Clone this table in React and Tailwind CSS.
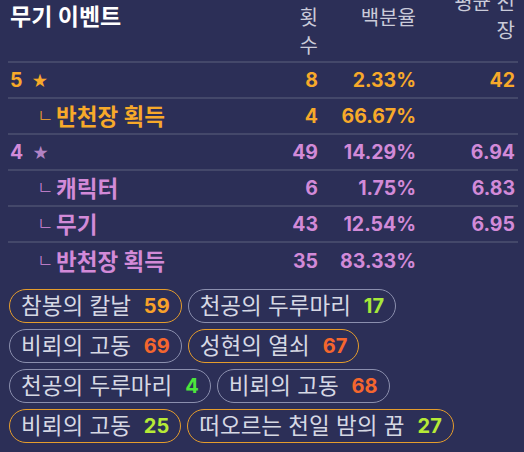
import React from "react";

const KR = "font-['Inter','Noto_Sans_CJK_KR',sans-serif]";

const rows = [
  { label: "5", star: true, tone: "text-[#f7a92a]", starTone: "text-[#f7a92a]", count: "8", pct: "2.33%", avg: "42" },
  { label: "반천장 획득", sub: true, tone: "text-[#f7a92a]", count: "4", pct: "66.67%", avg: "" },
  { label: "4", star: true, tone: "text-[#d28ad8]", starTone: "text-[#b283c4]", count: "49", pct: "14.29%", avg: "6.94" },
  { label: "캐릭터", sub: true, tone: "text-[#d28ad8]", count: "6", pct: "1.75%", avg: "6.83" },
  { label: "무기", sub: true, tone: "text-[#d28ad8]", count: "43", pct: "12.54%", avg: "6.95" },
  { label: "반천장 획득", sub: true, tone: "text-[#d28ad8]", count: "35", pct: "83.33%", avg: "", last: true },
];

const chips = [
  { name: "참봉의 칼날", n: "59", border: "border-[#e49c2c]", num: "text-[#f8a12a]" },
  { name: "천공의 두루마리", n: "17", border: "border-[#8b8fae]", num: "text-[#a6e83a]" },
  { name: "비뢰의 고동", n: "69", border: "border-[#8b8fae]", num: "text-[#f5662e]" },
  { name: "성현의 열쇠", n: "67", border: "border-[#e49c2c]", num: "text-[#f5662e]" },
  { name: "천공의 두루마리", n: "4", border: "border-[#8b8fae]", num: "text-[#4ce63c]" },
  { name: "비뢰의 고동", n: "68", border: "border-[#8b8fae]", num: "text-[#f5662e]" },
  { name: "비뢰의 고동", n: "25", border: "border-[#e49c2c]", num: "text-[#b6ea36]" },
  { name: "떠오르는 천일 밤의 꿈", n: "27", border: "border-[#e49c2c]", num: "text-[#b6ea36]" },
];

function Row({ r }) {
  return (
    <div className={`grid grid-cols-[1fr_44px_98px_99px] items-center h-[36px] pr-[3px] pt-[2px] ${r.last ? "" : "border-b-2 border-[#44486a]"} ${r.tone} font-bold text-[19.5px]`}>
      <div className="pl-[2px] flex items-center">
        {r.sub ? (
          <>
            <span className="ml-[27px] w-[19px] font-light text-[18px] leading-none -mt-[3px]">ㄴ</span>
            <span className="text-[22.5px] leading-none">{r.label}</span>
          </>
        ) : (
          <>
            <span>{r.label}</span>
            <span className={`ml-[9px] text-[16px] ${r.starTone}`}>★</span>
          </>
        )}
      </div>
      <div className="text-right">{r.count}</div>
      <div className="text-right">{r.pct}</div>
      <div className="text-right">{r.avg}</div>
    </div>
  );
}

export default function App() {
  return (
    <div className={`w-[524px] h-[452px] overflow-hidden bg-[#2c2f57] ${KR}`}>
      <div className="ml-[8px] w-[510px]">
        <div className="grid grid-cols-[1fr_44px_98px_99px] h-[63px] pr-[3px] border-b-2 border-[#44486a] text-[#cacbd9] text-[20px] leading-[28px]">
          <div className="pl-[2px] pt-[3px] text-white font-bold text-[23px]">무기 이벤트</div>
          <div className="pt-[4px] text-right">횟<br />수</div>
          <div className="pt-[4px] text-right">백분율</div>
          <div className="-mt-[11px] text-right">평균 천<br />장</div>
        </div>
        {rows.map((r, i) => (
          <Row key={i} r={r} />
        ))}
      </div>
      <div className="flex flex-wrap gap-[6px] pl-[9px] pr-[40px] mt-[10px]">
        {chips.map((c, i) => (
          <div key={i} className={`h-[34px] flex items-center gap-[13px] pl-[11px] pr-[11px] rounded-full border ${c.border}`}>
            <span className="text-[#d6d8e4] text-[22.5px] leading-none">{c.name}</span>
            <span className={`font-bold text-[20px] leading-none ${c.num}`}>{c.n}</span>
          </div>
        ))}
      </div>
    </div>
  );
}
